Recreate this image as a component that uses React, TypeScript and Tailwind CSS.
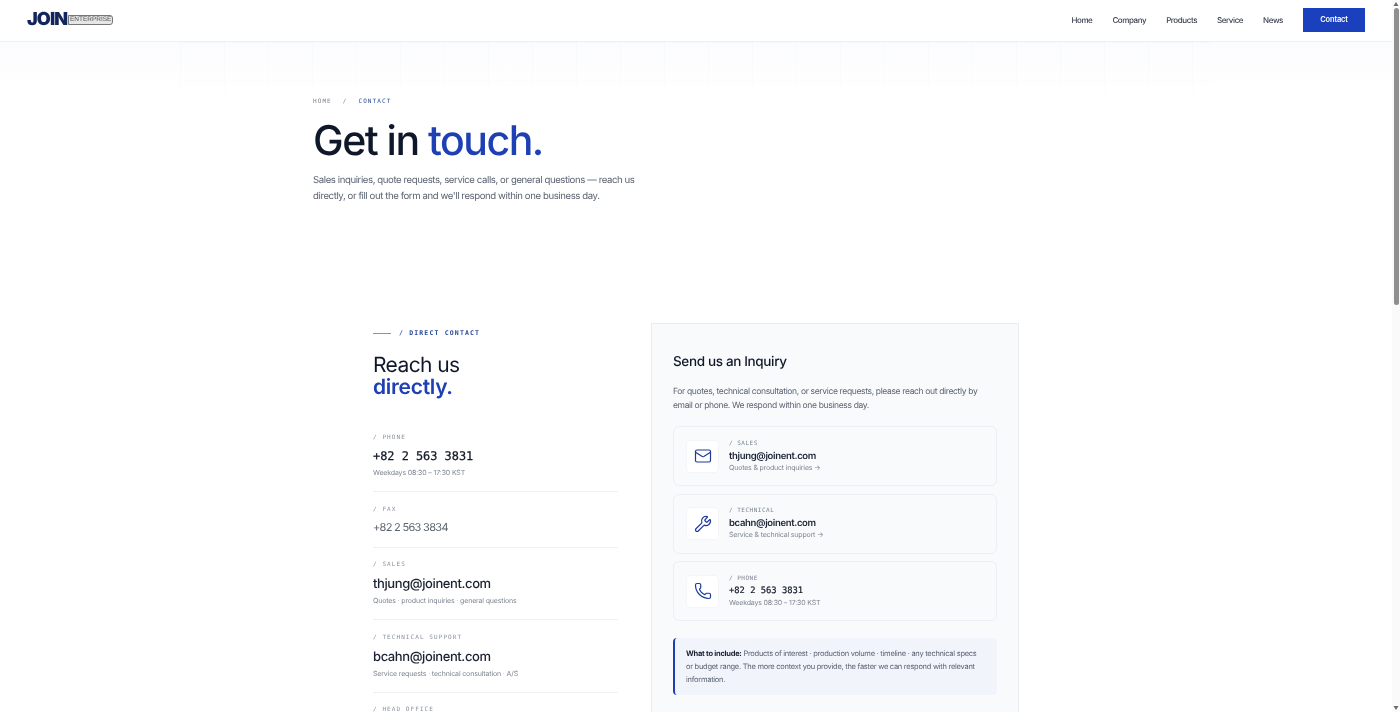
import React from "react";
import { Mail, Phone, Wrench } from "lucide-react";

const inter = "font-['Inter',sans-serif]";
const mono = "font-['DejaVu_Sans_Mono',monospace]";

const navLinks = ["Home", "Company", "Products", "Service", "News"];

const Label: React.FC<{ text: string }> = ({ text }) => (
  <div className={`${mono} text-[6px] leading-[8px] tracking-[1.08px] text-[#8a919e] uppercase`}>/ {text}</div>
);

const Header: React.FC = () => (
  <header className="relative z-10 h-[42px] flex items-center justify-between border-b border-[#eef0f3] bg-white pb-px pl-[27px] pr-[27px]">
    <div className="flex items-center">
      <span className={`${inter} text-[18px] font-black leading-none tracking-[-0.05em] text-[#13265c]`}>JOIN</span>
      <span className="ml-px h-[10px] w-[45px] flex items-center justify-center rounded-r-[3px] border border-[#777] bg-[#e6e6e8] font-['Liberation_Sans',sans-serif] text-[6.5px] leading-none text-[#555]">
        ENTERPRISE
      </span>
    </div>
    <nav className={`${inter} flex items-center text-[8px] tracking-[-0.42px] font-medium text-[#3b4251]`}>
      <div className="flex gap-[20px]">
        {navLinks.map((l) => (
          <a key={l}>{l}</a>
        ))}
      </div>
      <button className="ml-[20px] h-[24px] w-[62px] bg-[#1a40bd] pb-px text-[7.5px] tracking-[-0.15px] font-semibold text-white">Contact</button>
    </nav>
  </header>
);

const Hero: React.FC = () => (
  <section className="relative h-[252px] pl-[313px] pt-[56px]">
    <div className="absolute inset-x-0 top-0 h-[50px] bg-gradient-to-b from-[#f8f9fd]/50 to-transparent" />
    <div className="absolute inset-x-[180px] top-0 h-[60px] bg-[linear-gradient(#f7f8fb_1px,transparent_1px),linear-gradient(90deg,#f7f8fb_1px,transparent_1px)] bg-[size:44px_38px] [mask-image:linear-gradient(black,transparent)]" />
    <div className={`${mono} relative flex text-[6px] leading-[8px] tracking-[1.08px] uppercase`}>
      <span className="text-[#7d8591]">Home</span>
      <span className="ml-[11px] text-[#7d8591]">/</span>
      <span className="ml-[11px] text-[#2b4a9a]">Contact</span>
    </div>
    <h1 className={`${inter} relative mt-[6px] text-[41px] leading-[56px] font-medium tracking-[-1.5px] text-[#0f172a]`}>
      Get in <span className="text-[#1e40b4]">touch.</span>
    </h1>
    <p className={`${inter} relative mt-[5px] w-[340px] text-[9.6px] leading-[16px] tracking-[-0.41px] text-[#5b6472]`}>
      Sales inquiries, quote requests, service calls, or general questions — reach us directly, or fill out the form and we'll respond within one business day.
    </p>
  </section>
);

const contacts = [
  { label: "Phone", value: "+82 2 563 3831", sub: "Weekdays 08:30 – 17:30 KST", kind: "mono" },
  { label: "Fax", value: "+82 2 563 3834", sub: "", kind: "fax" },
  { label: "Sales", value: "thjung@joinent.com", sub: "Quotes · product inquiries · general questions", kind: "mail" },
  { label: "Technical Support", value: "bcahn@joinent.com", sub: "Service requests · technical consultation · A/S", kind: "mail" },
];

const LeftColumn: React.FC = () => (
  <div className="w-[245px]">
    <div className={`${mono} flex items-center text-[6.5px] leading-[8px] tracking-[1.16px] uppercase text-[#2b4a9a]`}>
      <span className="h-px w-[18px] bg-[#8a94a6]" />
      <span className="ml-[8px] font-bold">/ Direct Contact</span>
    </div>
    <h2 className={`${inter} mt-[18px] text-[21px] leading-[22px] font-normal tracking-[-0.6px] text-[#0f172a]`}>
      Reach us
      <br />
      <span className="font-semibold tracking-[-0.3px] text-[#1e40b4]">directly.</span>
    </h2>
    <div className="mt-[35px]">
      {contacts.map((c) => (
        <div key={c.label} className={`border-b border-[#eef0f3] mb-[13.5px] ${c.kind === "fax" ? "pb-[11px]" : "pb-[13px]"}`}>
          <Label text={c.label} />
          {c.kind === "mono" && (
            <div className={`${mono} mt-[5px] mb-px text-[11.9px] leading-[18px] [-webkit-text-stroke:0.25px_#111827] text-[#111827]`}>{c.value}</div>
          )}
          {c.kind === "fax" && <div className={`${inter} mt-[4px] text-[11px] leading-[18px] tracking-[-0.7px] text-[#5b6472]`}>{c.value}</div>}
          {c.kind === "mail" && <div className={`${inter} mt-[6px] text-[13px] leading-[18px] tracking-[-0.4px] font-medium text-[#1b2233]`}>{c.value}</div>}
          {c.sub && <div className={`${inter} mt-[3px] text-[7px] leading-[10px] tracking-[-0.15px] text-[#7d8591]`}>{c.sub}</div>}
        </div>
      ))}
      <Label text="Head Office" />
    </div>
  </div>
);

const inquiryCards = [
  { Icon: Mail, label: "Sales", value: "thjung@joinent.com", sub: "Quotes & product inquiries →", mono: false },
  { Icon: Wrench, label: "Technical", value: "bcahn@joinent.com", sub: "Service & technical support →", mono: false },
  { Icon: Phone, label: "Phone", value: "+82 2 563 3831", sub: "Weekdays 08:30 – 17:30 KST", mono: true },
];

const InquiryCard: React.FC = () => (
  <div className="w-[368px] h-[420px] border border-[#e9ecf1] bg-[#f8fafc] px-[21px] pt-[29px]">
    <h3 className={`${inter} text-[13.5px] leading-[18px] tracking-[-0.35px] font-medium text-[#0f172a]`}>Send us an Inquiry</h3>
    <p className={`${inter} mt-[14px] w-[310px] text-[8.5px] leading-[14px] tracking-[-0.35px] text-[#5b6472]`}>
      For quotes, technical consultation, or service requests, please reach out directly by email or phone. We respond within one business day.
    </p>
    <div className="mt-[13px] flex flex-col gap-[7.5px]">
      {inquiryCards.map(({ Icon, label, value, sub, mono: isMono }) => (
        <div key={label} className="h-[60px] flex items-center rounded-[6px] border border-[#eceff4] bg-[#f8fafc] pl-[13px]">
          <div className="h-[31px] w-[31px] flex items-center justify-center rounded-[4px] bg-white shadow-[0_0_0_1px_#f4f5f9]">
            <Icon size={18} strokeWidth={1.6} className="text-[#1e3a9a]" />
          </div>
          <div className="ml-[11px]">
            <div className={`${mono} text-[6px] leading-[8px] tracking-[0.5px] text-[#7d8591] uppercase`}>/ {label}</div>
            {isMono ? (
              <div className={`${mono} mt-[2px] text-[8.8px] leading-[13px] [-webkit-text-stroke:0.2px_#111827] text-[#111827]`}>{value}</div>
            ) : (
              <div className={`${inter} mt-[2px] text-[9.5px] leading-[13px] tracking-[-0.33px] font-semibold text-[#1b2233]`}>{value}</div>
            )}
            <div className={`${inter} text-[7px] leading-[10px] tracking-[-0.18px] text-[#7d8591]`}>{sub}</div>
          </div>
        </div>
      ))}
    </div>
    <div className={`${inter} mt-[17px] rounded-[4px] border-l-2 border-[#1e40af] bg-[#f1f4fb] pl-[11px] pr-[14px] py-[9px] text-[7.5px] leading-[13px] tracking-[-0.27px] text-[#5b6472]`}>
      <strong className="font-bold text-[#1b2233]">What to include:</strong> Products of interest · production volume · timeline · any technical specs or budget range. The more context you provide, the faster we can respond with relevant information.
    </div>
  </div>
);

const Scrollbar: React.FC = () => (
  <div className="w-[8px] shrink-0 flex flex-col justify-between bg-[#fafafa]">
    <div className="flex flex-col items-center">
      <svg width="8" height="8" viewBox="0 0 8 8">
        <path d="M4 2 L6.5 6 L1.5 6 Z" fill="#6b6b6b" />
      </svg>
      <div className="h-[297px] w-[5px] rounded-full bg-[#8f8f8f]" />
    </div>
    <svg width="8" height="8" viewBox="0 0 8 8">
      <path d="M4 6 L6.5 2 L1.5 2 Z" fill="#6b6b6b" />
    </svg>
  </div>
);

export default function App() {
  return (
    <div className="h-[712px] flex overflow-hidden bg-white opacity-[0.999] [text-rendering:geometricPrecision]">
      <main className="flex-1 min-w-0 overflow-hidden">
        <Header />
        <Hero />
        <div className="mt-[29px] flex justify-center">
          <div className="w-[646px] flex justify-between">
            <div className="pt-[6px]">
              <LeftColumn />
            </div>
            <InquiryCard />
          </div>
        </div>
      </main>
      <Scrollbar />
    </div>
  );
}
